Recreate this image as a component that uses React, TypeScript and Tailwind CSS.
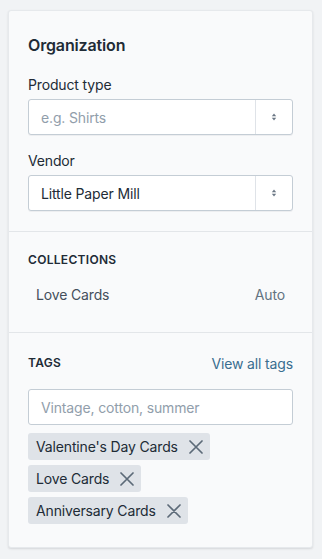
function Stepper() {
  return (
    <div className="flex w-[37px] items-center justify-center border-l border-[#dfe3e8]">
      <svg width="8" height="12" viewBox="0 0 8 12" fill="#6b7785">
        <path d="M4 2.5 L6.2 5.2 H1.8 Z" />
        <path d="M4 9.5 L6.2 6.8 H1.8 Z" />
      </svg>
    </div>
  )
}

function Select({ value, placeholder }: { value?: string; placeholder?: string }) {
  return (
    <div className="flex h-9 rounded-[3px] border border-[#c4cdd5] bg-white shadow-[0_1px_0_rgba(22,29,37,0.05)]">
      <div className={`flex flex-1 items-center px-3 text-[14px] ${value ? 'text-[#212b36]' : 'text-[#919eab]'}`}>
        {value || placeholder}
      </div>
      <Stepper />
    </div>
  )
}

function Tag({ label }: { label: string }) {
  return (
    <div className="flex h-[27px] w-fit items-center rounded-[3px] bg-[#dfe3e8] pl-2 pr-[7px] text-[14px] text-[#212b36]">
      <span>{label}</span>
      <svg className="ml-[11px]" width="14" height="14" viewBox="0 0 14 14" stroke="#5c6a78" strokeWidth="1.7" strokeLinecap="round">
        <path d="M1 1 L13 13 M13 1 L1 13" />
      </svg>
    </div>
  )
}

export default function App() {
  return (
    <div className="min-h-[559px] bg-[#f1f3f5] pt-[10px] font-['Inter',sans-serif] tracking-[-0.15px]">
      <div className="ml-2 w-[305px] rounded-[3px] border border-[#e6e9ec] bg-[#f9fafb] shadow-[0_1px_2px_rgba(63,63,68,0.15)]">
        <div className="px-[19px] pb-5 pt-5">
          <h2 className="text-[16px] font-semibold leading-7 text-[#212b36]">Organization</h2>
          <div className="mt-4 mb-1 text-[14px] leading-5 text-[#212b36]">Product type</div>
          <Select placeholder="e.g. Shirts" />
          <div className="mt-4 mb-1 text-[14px] leading-5 text-[#212b36]">Vendor</div>
          <Select value="Little Paper Mill" />
        </div>

        <div className="border-t border-[#e3e6e9] px-[19px] pb-5 pt-5">
          <div className="text-[12px] font-semibold uppercase leading-4 tracking-[0.3px] text-[#212b36]">Collections</div>
          <div className="mt-2 flex h-9 items-center justify-between px-2 text-[14px]">
            <span className="text-[#454f5b]">Love Cards</span>
            <span className="text-[#637381]">Auto</span>
          </div>
        </div>

        <div className="border-t border-[#e3e6e9] px-[19px] pb-[23px] pt-5">
          <div className="flex h-5 items-center justify-between">
            <span className="text-[12px] font-semibold uppercase tracking-[0.3px] text-[#212b36]">Tags</span>
            <a className="text-[14px] text-[#3a6e90]">View all tags</a>
          </div>
          <div className="mt-4 flex h-9 items-center rounded-[3px] border border-[#c4cdd5] bg-white px-3 text-[14px] text-[#919eab]">
            Vintage, cotton, summer
          </div>
          <div className="mt-2 flex flex-col gap-[5px]">
            <Tag label="Valentine's Day Cards" />
            <Tag label="Love Cards" />
            <Tag label="Anniversary Cards" />
          </div>
        </div>
      </div>
    </div>
  )
}
